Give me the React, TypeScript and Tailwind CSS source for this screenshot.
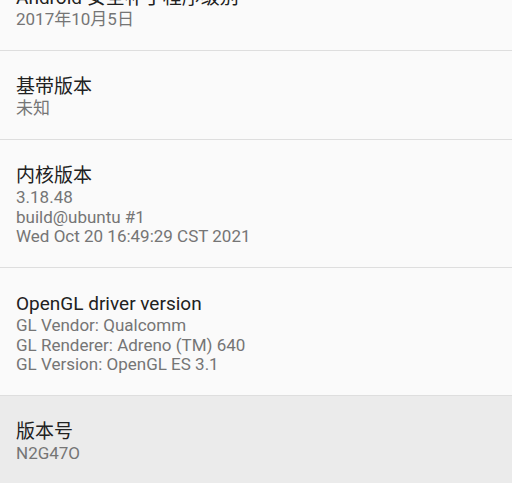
const items = [
  { title: "Android 安全补丁程序级别", lines: ["2017年10月5日"] },
  { title: "基带版本", lines: ["未知"] },
  {
    title: "内核版本",
    lines: ["3.18.48", "build@ubuntu #1", "Wed Oct 20 16:49:29 CST 2021"],
  },
  {
    title: "OpenGL driver version",
    lines: [
      "GL Vendor: Qualcomm",
      "GL Renderer: Adreno (TM) 640",
      "GL Version: OpenGL ES 3.1",
    ],
  },
  { title: "版本号", lines: ["N2G47O"], pressed: true },
];

export default function App() {
  return (
    <div
      className="w-[512px] h-[483px] overflow-hidden bg-[#fafafa]"
      style={{ fontFamily: 'Roboto, "Noto Sans CJK SC", sans-serif' }}
    >
      <div className="-mt-[38px] flex flex-col">
        {items.map((item, i) => (
          <div
            key={i}
            className={`px-4 pt-[23px] pb-[20.5px] border-b border-[#dedede] ${
              item.pressed ? "bg-[#ebebeb] border-b-0 h-[200px]" : ""
            }`}
          >
            <div className="text-[19px] leading-[25px] text-[#212121]">
              {item.title}
            </div>
            {item.lines.map((line) => (
              <div key={line} className="text-[17px] leading-[19.5px] text-[#757575]">
                {line}
              </div>
            ))}
          </div>
        ))}
      </div>
    </div>
  );
}
